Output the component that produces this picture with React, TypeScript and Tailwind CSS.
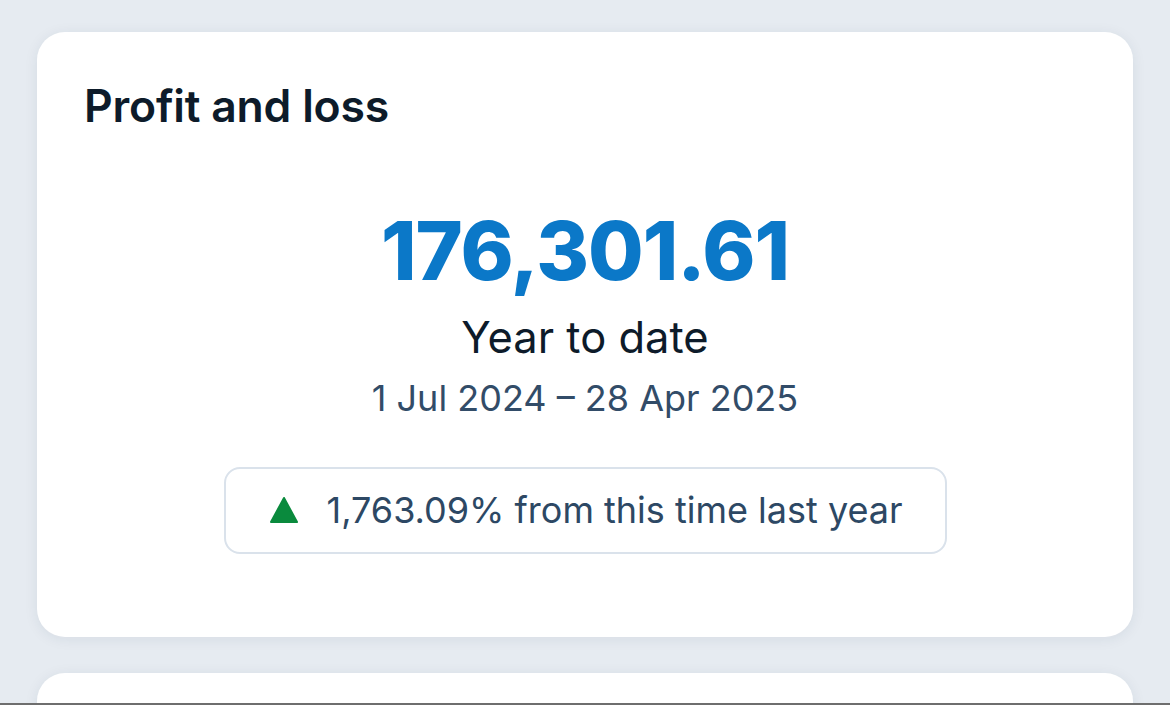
import React from 'react';

const App = () => {
  return (
    <div
      className="flex h-[705px] w-[1170px] flex-col overflow-hidden bg-[#e6ebf1]"
      style={{ fontFamily: 'Inter, "Noto Sans", sans-serif' }}
    >
      <div className="flex flex-1 flex-col gap-[36px] overflow-hidden px-[37px] pt-[32px]">
        {/* Profit and loss card */}
        <section className="flex h-[605px] shrink-0 flex-col rounded-[28px] bg-white px-[47px] pt-[52px] shadow-[0_2px_14px_rgba(30,50,80,0.08)]">
          <h2 className="text-[44.5px] leading-none font-semibold tracking-[-0.2px] text-[#0d1b2a]">
            Profit and loss
          </h2>

          <div className="mt-[82px] flex flex-col items-center">
            <div className="text-[80.5px] leading-none font-extrabold tracking-[-1px] text-[#0b78c8]">
              176,301.61
            </div>
            <div className="mt-[25px] text-[43.5px] leading-none text-[#0d1b2a]">Year to date</div>
            <div className="mt-[20px] text-[36px] leading-none text-[#324c68]">
              1 Jul 2024 – 28 Apr 2025
            </div>

            <div className="mt-[51px] flex h-[87px] w-[723px] items-center rounded-[16px] border-2 border-[#dae2eb] pl-[43px]">
              <svg width="30" height="28" viewBox="0 0 30 28" className="shrink-0">
                <path d="M15 2 L28 26 L2 26 Z" fill="#0a8a3d" stroke="#0a8a3d" strokeWidth="2" strokeLinejoin="round" />
              </svg>
              <span className="ml-[28px] text-[36px] leading-none text-[#2d4864]">
                1,763.09% from this time last year
              </span>
            </div>
          </div>
        </section>

        {/* next card, cut off */}
        <section className="h-[200px] shrink-0 rounded-[28px] bg-white shadow-[0_2px_14px_rgba(30,50,80,0.08)]" />
      </div>
      <div className="h-[2px] shrink-0 bg-[#6e6e6e]" />
    </div>
  );
};

export default App;
